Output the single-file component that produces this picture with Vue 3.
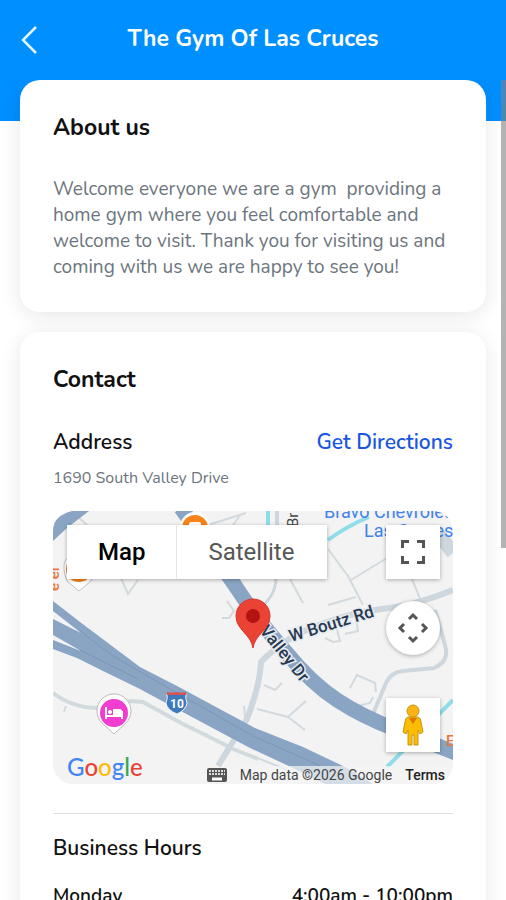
<template>
  <div class="screen">
    <header class="top-bar">
      <button class="back-button" type="button" aria-label="Back">
        <svg viewBox="0 0 18 30" width="18" height="30">
          <path d="M16 2 L3 15 L16 28" fill="none" stroke="#e6f6ff" stroke-width="2.5" />
        </svg>
      </button>
      <h1 class="top-title">{{ gym.name }}</h1>
    </header>

    <main class="content">
      <section class="card">
        <h2 class="card-title">About us</h2>
        <p class="about-text">{{ gym.about }}</p>
      </section>

      <section class="card">
        <h2 class="card-title">Contact</h2>
        <div class="row">
          <h3 class="row-title">Address</h3>
          <a class="directions" href="#map">Get Directions</a>
        </div>
        <p class="address">{{ gym.address }}</p>

        <div id="map" class="map">
          <svg class="map-canvas" viewBox="0 0 400 273" preserveAspectRatio="xMidYMid slice">
            <rect width="400" height="273" fill="#f3f3f4" />

            <!-- Side streets -->
            <g fill="none" stroke="#d3dade" stroke-width="2">
              <path d="M24 5 L35 15 M155 14 L193 2 M180 14 L188 3" />
              <path d="M68 67 L75 83 L85 69 M174 90 L181 100 L176 107 L169 107" />
              <path d="M275 38 L295 65 L310 94 M298 69 L334 47 M237 68 L250 92 M359 68 L368 90" />
              <path d="M275 94 L303 86 M283 107 L302 102 L305 120 L292 123 M272 127 L280 131 L287 130 L282 111" />
              <path d="M0 182 Q20 197 45 197 L78 190 L90 191 L128 212 Q165 230 180 238 L205 248" stroke-width="4" />
              <path d="M13 195 L11 201 M191 195 L192 206 L198 203" />
              <path d="M211 174 L222 179 L229 172 M204 198 L235 206 L253 190 M235 206 L252 219" />
              <path d="M297 177 L304 164 L322 172 L323 181 M305 195 L317 192 L320 186" />
              <path d="M197 244 L237 260" />
            </g>
            <g fill="none" stroke="#cdd7dd">
              <path d="M320 203 L333 172 Q338 161 350 160 L381 157 Q397 150 392 134 Q386 112 382 99" stroke-width="4" />
              <path d="M223 68 Q222 88 203 99" stroke-width="3" />
              <path d="M165 255 L194 208 Q207 174 208 151 Q219 139 244 123 Q290 103 322 99 Q365 94 400 79" stroke-width="6" />
              <path d="M386 24 L400 42" stroke-width="14" />
              <path d="M224 0 L224 14" stroke-width="4" />
            </g>

            <!-- Canals -->
            <path d="M215 0 L215 16 M275 29 Q294 15 316 6 M334 256 L400 189" fill="none" stroke="#91dce9" stroke-width="4" />

            <!-- Highways -->
            <path d="M0 30 V12 Q8 3 18 0 H36 L14 17 Z" fill="#89a5c3" />
            <path
              d="M128 -3 L181 73 Q205 110 232 140 Q258 172 284 189 Q310 206 342 218 L403 242"
              fill="none"
              stroke="#89a5c3"
              stroke-width="15"
            />
            <path
              d="M0 90 L27 111 L87 156 L124 175 L202 217 L250 236 L292 256 L320 273 H272 L240 257 L197 237 L124 198 L85 177 L50 160 L24 147 L0 138 Z"
              fill="#89a5c3"
            />
            <path d="M0 100 L28 122 L0 108 Z M0 124 L28 140 L0 129 Z" fill="#f3f3f4" />
            <path d="M27 120 L60 145 L124 182 L200 225 L290 265 M27 139 L85 168" fill="none" stroke="#7b97b7" />

            <!-- Road labels -->
            <g class="road-label">
              <text transform="translate(238 131) rotate(-17)">W Boutz Rd</text>
              <text transform="translate(206 120) rotate(51)">Valley Dr</text>
            </g>
            <text class="road-small" transform="translate(245 16) rotate(-90)">Br</text>
            <g class="place-blue">
              <text x="271" y="7">Bravo Chevrolet</text>
              <text x="311" y="26">Las Cruces</text>
            </g>
            <text class="place-orange" x="393" y="235">E</text>
            <text class="place-orange" transform="translate(6 80) rotate(-90)">e el</text>

            <!-- Place pins -->
            <g>
              <path d="M26 80 L14 70 Q4 44 26 43 Q48 44 38 70 Z" fill="#fff" stroke="#c2c2c2" />
              <circle cx="26" cy="58" r="13" fill="#f88419" />
              <circle cx="142" cy="16" r="15" fill="#fff" />
              <circle cx="142" cy="17" r="13" fill="#f88419" />
              <rect x="136" y="11" width="12" height="6" rx="2" fill="#fff" />
            </g>
            <g>
              <path d="M61 223 L49 212 A17 17 0 1 1 73 212 Z" fill="#fff" stroke="#bbb" />
              <circle cx="61" cy="202" r="14" fill="#f13dd0" />
              <path d="M53 196 V208 M53 205 H69 M69 208 V200" fill="none" stroke="#fff" stroke-width="2" />
              <path d="M60 198 H67 Q70 199 70 204 H60 Z" fill="#fff" />
              <circle cx="57" cy="201" r="2" fill="#fff" />
            </g>
            <g>
              <path d="M114 183 H133 Q132 187 134 192 Q133 199 124 203 Q114 199 113 192 Q115 187 114 183 Z" fill="#3e78bd" stroke="#eef3f8" />
              <path d="M114 181 Q119 182 124 181 Q129 182 133 181 V184 H114 Z" fill="#d65457" />
              <text class="shield" x="124" y="197">10</text>
            </g>
            <path d="M200 137 C198 123 183 119 183 105 A17 17 0 0 1 217 105 C217 119 202 123 200 137 Z" fill="#ea4335" stroke="#d9362a" />
            <circle cx="200" cy="105" r="7" fill="#b31412" />
          </svg>

          <div class="map-types">
            <button class="map-type active" type="button">Map</button>
            <button class="map-type" type="button">Satellite</button>
          </div>

          <div class="map-controls">
            <button class="map-control" type="button" aria-label="Fullscreen">
              <svg viewBox="0 0 24 24" width="24" height="24" fill="none" stroke="#555" stroke-width="3">
                <path d="M1.5 8 V1.5 H8 M16 1.5 H22.5 V8 M22.5 16 V22.5 H16 M8 22.5 H1.5 V16" />
              </svg>
            </button>
            <button class="map-control round" type="button" aria-label="Move map">
              <svg viewBox="0 0 32 32" width="32" height="32" fill="none" stroke="#555" stroke-width="3">
                <path d="M12 7 L16 3 L20 7 M25 12 L29 16 L25 20 M20 25 L16 29 L12 25 M7 20 L3 16 L7 12" />
              </svg>
            </button>
            <button class="map-control street-view" type="button" aria-label="Street View">
              <svg viewBox="0 0 24 42" width="24" height="42">
                <path d="M7 13 H17 Q20 14 20 18 L22 28 L19 30 L17 26 V41 H13 V31 H11 V41 H7 V26 L5 30 L2 28 L4 18 Q4 14 7 13 Z" fill="#fbbc04" stroke="#c99216" />
                <circle cx="12" cy="7" r="6" fill="#fbb311" stroke="#c99216" />
                <path d="M8 14 H16 L12 20 Z" fill="#e37400" />
              </svg>
            </button>
          </div>

          <div class="map-footer">
            <span class="google" aria-label="Google">
              <span v-for="(letter, i) in logo" :key="i" :class="letter.color">{{ letter.char }}</span>
            </span>
            <div class="map-legal">
              <button class="keyboard" type="button" aria-label="Keyboard shortcuts">
                <svg viewBox="0 0 20 14" width="20" height="14">
                  <rect width="20" height="14" rx="2" fill="#555" />
                  <path d="M2 3 H18 M2 6 H18" stroke="#ddd" stroke-width="2" stroke-dasharray="2 1" />
                  <path d="M5 11 H15" stroke="#fff" stroke-width="3" />
                </svg>
              </button>
              <span>Map data ©2026 Google</span>
              <a class="terms" href="#terms">Terms</a>
            </div>
          </div>
        </div>

        <div class="hours">
          <h3 class="row-title">Business Hours</h3>
          <dl class="hours-list">
            <div v-for="entry in hours" :key="entry.day" class="row">
              <dt>{{ entry.day }}</dt>
              <dd>{{ entry.time }}</dd>
            </div>
          </dl>
        </div>
      </section>
    </main>
    <div class="scroll-thumb"></div>
  </div>
</template>

<script setup>
const gym = {
  name: 'The Gym Of Las Cruces',
  about: 'Welcome everyone we are a gym  providing a home gym where you feel comfortable and welcome to visit. Thank you for visiting us and coming with us we are happy to see you!',
  address: '1690 South Valley Drive'
};

const hours = [
  { day: 'Monday', time: '4:00am - 10:00pm' }
];

const logo = [
  { char: 'G', color: 'blue' },
  { char: 'o', color: 'red' },
  { char: 'o', color: 'yellow' },
  { char: 'g', color: 'blue' },
  { char: 'l', color: 'green' },
  { char: 'e', color: 'red' }
];
</script>

<style>
body {
  margin: 0;
}
</style>

<style scoped>
.screen {
  position: relative;
  display: flex;
  flex-direction: column;
  height: 100vh;
  overflow: hidden;
  box-sizing: border-box;
  background: linear-gradient(#008fff 0 121px, #fff 121px);
  font-family: Nunito, "Open Sans", sans-serif;
  color: #111;
}

h1, h2, h3, p, dl, dd {
  margin: 0;
}

button {
  border: 0;
  padding: 0;
  background: none;
  font: inherit;
  color: inherit;
}

/* Header */
.top-bar {
  display: grid;
  grid-template-columns: 40px 1fr 40px;
  align-items: center;
  flex: none;
  height: 80px;
  padding: 0 20px;
}

.back-button {
  display: flex;
}

.top-title {
  font-size: 23px;
  line-height: 28px;
  font-weight: 700;
  color: #fff;
  text-align: center;
  padding-bottom: 2px;
}

/* Cards */
.content {
  flex: 1;
  display: flex;
  flex-direction: column;
  gap: 20px;
  padding: 0 20px;
  overflow-y: auto;
  scrollbar-width: none;
}

.card {
  flex: none;
  padding: 32px 33px;
  border-radius: 20px;
  background: #fff;
  box-shadow: 0 4px 20px rgba(30, 30, 50, 0.1);
}

.card-title {
  font-size: 23px;
  line-height: 32px;
  font-weight: 700;
}

.about-text {
  margin-top: 32px;
  font-size: 19px;
  line-height: 26px;
  color: #6c757d;
  white-space: pre-wrap;
}

.row {
  display: flex;
  justify-content: space-between;
  align-items: center;
}

.card-title + .row {
  margin-top: 32px;
}

.row-title {
  font-size: 21px;
  line-height: 28px;
  font-weight: 600;
}

.directions {
  font-size: 21px;
  line-height: 28px;
  font-weight: 600;
  color: #1a56e0;
  text-decoration: none;
}

.address {
  margin-top: 10px;
  font-size: 16px;
  line-height: 24px;
  color: #6c757d;
}

/* Map */
.map {
  position: relative;
  height: 273px;
  margin-top: 21px;
  border-radius: 20px;
  overflow: hidden;
  font-family: Roboto, sans-serif;
}

.map-canvas {
  display: block;
  width: 100%;
  height: 100%;
}

.road-label {
  font-size: 17px;
  font-weight: 500;
  fill: #28384f;
  stroke: #e6ebf0;
  stroke-width: 3px;
  paint-order: stroke;
}

.road-small {
  font-size: 15px;
  fill: #444;
}

.place-blue {
  font-size: 18px;
  fill: #3f83e8;
}

.place-orange {
  font-size: 15px;
  font-weight: 500;
  fill: #e8773a;
}

.shield {
  font-size: 12px;
  font-weight: 700;
  fill: #fff;
  text-anchor: middle;
}

.map-types {
  position: absolute;
  top: 14px;
  left: 14px;
  display: flex;
  background: #fff;
  box-shadow: 0 1px 4px rgba(0, 0, 0, 0.3);
}

.map-type {
  height: 54px;
  padding: 0 31px;
  font-size: 24px;
  color: #565656;
}

.map-type.active {
  font-weight: 500;
  color: #000;
}

.map-type + .map-type {
  padding-right: 33px;
  border-left: 1px solid #e6e6e6;
}

.map-controls {
  position: absolute;
  top: 14px;
  right: 13px;
  bottom: 32px;
  display: flex;
  flex-direction: column;
  gap: 22px;
}

.map-control {
  display: flex;
  align-items: center;
  justify-content: center;
  width: 54px;
  height: 54px;
  background: #fff;
  box-shadow: 0 1px 4px rgba(0, 0, 0, 0.3);
}

.map-control.round {
  border-radius: 50%;
}

.map-control.street-view {
  margin-top: auto;
}

.map-footer {
  position: absolute;
  left: 14px;
  right: 0;
  bottom: 0;
  display: flex;
  justify-content: space-between;
  align-items: flex-end;
}

.google {
  font-family: Lato, sans-serif;
  font-size: 24px;
  line-height: 34px;
  font-weight: 500;
}

.blue { color: #4285f4; }
.red { color: #ea4335; }
.yellow { color: #fbbc05; }
.green { color: #34a853; }

.map-legal {
  display: flex;
  align-items: center;
  gap: 13px;
  padding-right: 8px;
  background: linear-gradient(90deg, transparent 20px, rgba(245, 245, 245, 0.7) 34px);
  font-size: 14px;
  line-height: 18px;
  color: #444;
}

.keyboard {
  display: flex;
}

.terms {
  font-weight: 500;
  color: #222;
  text-decoration: none;
}

/* Business hours */
.hours {
  margin-top: 29px;
  padding-top: 20px;
  border-top: 1px solid #dfdfdf;
}

.hours-list {
  margin-top: 20px;
  font-size: 19px;
  line-height: 28px;
  font-weight: 600;
}

.scroll-thumb {
  position: absolute;
  top: 80px;
  right: 0;
  width: 5px;
  height: 52%;
  background: rgba(128, 128, 128, 0.6);
}
</style>
